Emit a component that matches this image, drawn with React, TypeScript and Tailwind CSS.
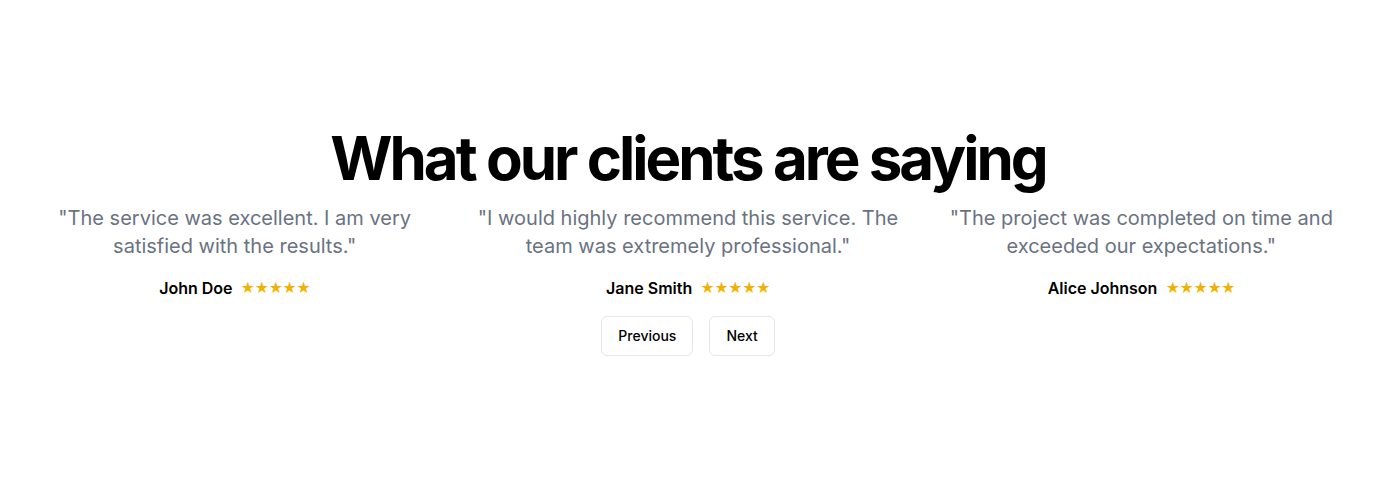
import { useState } from "react";

const testimonials = [
  { quote: "The service was excellent. I am very satisfied with the results.", name: "John Doe" },
  { quote: "I would highly recommend this service. The team was extremely professional.", name: "Jane Smith" },
  { quote: "The project was completed on time and exceeded our expectations.", name: "Alice Johnson" },
];

export default function App() {
  const [page, setPage] = useState(0);

  return (
    <div
      className="min-h-screen bg-white flex flex-col items-center justify-center px-6 py-12"
      style={{ fontFamily: "Inter, 'Liberation Sans', sans-serif" }}
    >
      <h2 className="text-6xl font-bold tracking-tighter text-black text-center">
        What our clients are saying
      </h2>
      <div className="grid grid-cols-3 gap-8 w-full mt-4">
        {testimonials.map(t => (
          <div key={t.name} className="flex flex-col items-center text-center">
            <p className="text-xl leading-7 text-gray-500">"{t.quote}"</p>
            <div className="flex items-center gap-2 mt-4">
              <span className="font-semibold text-base text-black">{t.name}</span>
              <span className="text-sm text-yellow-500 tracking-tighter">★★★★★</span>
            </div>
          </div>
        ))}
      </div>
      <div className="flex gap-4 mt-4">
        <button
          onClick={() => setPage(Math.max(0, page - 1))}
          className="h-10 px-4 rounded-md border border-gray-200 bg-white text-sm font-medium text-black hover:bg-gray-50"
        >
          Previous
        </button>
        <button
          onClick={() => setPage(page + 1)}
          className="h-10 px-4 rounded-md border border-gray-200 bg-white text-sm font-medium text-black hover:bg-gray-50"
        >
          Next
        </button>
      </div>
    </div>
  );
}
